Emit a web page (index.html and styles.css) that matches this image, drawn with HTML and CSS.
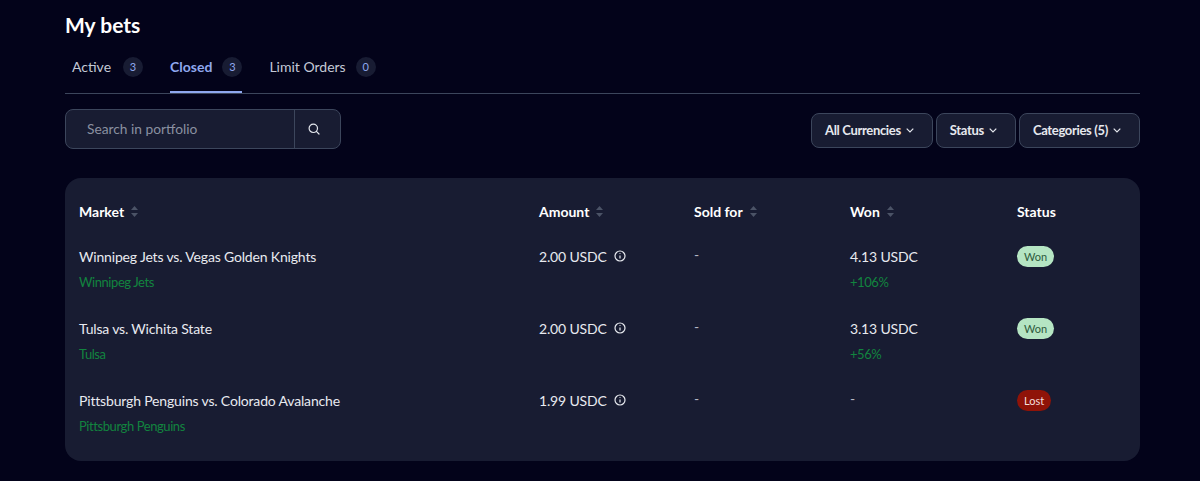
FILE: index.html
```html
<!DOCTYPE html>
<html lang="en">

<head>
    <meta charset="UTF-8">
    <meta name="viewport" content="width=device-width, initial-scale=1.0">
    <title>My bets</title>
    <link rel="stylesheet" href="styles.css">
</head>

<body>
    <main class="page">
        <h1 class="title">My bets</h1>

        <div class="tabs">
            <a class="tab">Active <span class="count">3</span></a>
            <a class="tab active">Closed <span class="count">3</span></a>
            <a class="tab">Limit Orders <span class="count">0</span></a>
        </div>

        <div class="toolbar">
            <div class="search">
                <div class="search-text">Search in portfolio</div>
                <div class="search-btn">
                    <svg width="12" height="12" viewBox="0 0 12 12" fill="none" stroke="#e4e7ee" stroke-width="1.2" stroke-linecap="round">
                        <circle cx="5.3" cy="5.3" r="4.2"/>
                        <path d="M8.4 8.4L11 11"/>
                    </svg>
                </div>
            </div>
            <div class="filters">
                <div class="filter">All Currencies <svg class="chev" viewBox="0 0 8 5"><path d="M.7.7L4 4l3.3-3.3"/></svg></div>
                <div class="filter">Status <svg class="chev" viewBox="0 0 8 5"><path d="M.7.7L4 4l3.3-3.3"/></svg></div>
                <div class="filter">Categories (5) <svg class="chev" viewBox="0 0 8 5"><path d="M.7.7L4 4l3.3-3.3"/></svg></div>
            </div>
        </div>

        <section class="card">
            <div class="row head">
                <div class="th">Market <svg class="sort" viewBox="0 0 7 11"><path d="M3.5 0L7 4H0z"/><path d="M3.5 11L0 7h7z"/></svg></div>
                <div class="th">Amount <svg class="sort" viewBox="0 0 7 11"><path d="M3.5 0L7 4H0z"/><path d="M3.5 11L0 7h7z"/></svg></div>
                <div class="th">Sold for <svg class="sort" viewBox="0 0 7 11"><path d="M3.5 0L7 4H0z"/><path d="M3.5 11L0 7h7z"/></svg></div>
                <div class="th">Won <svg class="sort" viewBox="0 0 7 11"><path d="M3.5 0L7 4H0z"/><path d="M3.5 11L0 7h7z"/></svg></div>
                <div class="th">Status</div>
            </div>

            <div class="row">
                <div>
                    <div class="main">Winnipeg Jets vs. Vegas Golden Knights</div>
                    <div class="sub">Winnipeg Jets</div>
                </div>
                <div class="main amount">2.00 USDC
                    <svg class="info" viewBox="0 0 12 12"><circle cx="6" cy="6" r="5"/><path d="M6 5.5v3M6 3.2v.8"/></svg>
                </div>
                <div class="dash">-</div>
                <div>
                    <div class="main">4.13 USDC</div>
                    <div class="sub">+106%</div>
                </div>
                <div><span class="badge won">Won</span></div>
            </div>

            <div class="row">
                <div>
                    <div class="main">Tulsa vs. Wichita State</div>
                    <div class="sub">Tulsa</div>
                </div>
                <div class="main amount">2.00 USDC
                    <svg class="info" viewBox="0 0 12 12"><circle cx="6" cy="6" r="5"/><path d="M6 5.5v3M6 3.2v.8"/></svg>
                </div>
                <div class="dash">-</div>
                <div>
                    <div class="main">3.13 USDC</div>
                    <div class="sub">+56%</div>
                </div>
                <div><span class="badge won">Won</span></div>
            </div>

            <div class="row">
                <div>
                    <div class="main">Pittsburgh Penguins vs. Colorado Avalanche</div>
                    <div class="sub">Pittsburgh Penguins</div>
                </div>
                <div class="main amount">1.99 USDC
                    <svg class="info" viewBox="0 0 12 12"><circle cx="6" cy="6" r="5"/><path d="M6 5.5v3M6 3.2v.8"/></svg>
                </div>
                <div class="dash">-</div>
                <div class="dash">-</div>
                <div><span class="badge lost">Lost</span></div>
            </div>
        </section>
    </main>
</body>

</html>
```

FILE: styles.css
```css
body {
    margin: 0;
    background: #03031a;
    color: #fff;
    font-family: 'Lato', sans-serif;
    font-size: 14px;
    overflow: hidden;
}

.page {
    width: 1075px;
    margin-left: 65px;
    padding-top: 11px;
}

.title {
    margin: 0;
    font-size: 21px;
    line-height: 28px;
    font-weight: 700;
    color: #fff;
}

.tabs {
    display: flex;
    gap: 27px;
    margin-top: 13px;
    padding-left: 7px;
    height: 41px;
    border-bottom: 1px solid #3c465c;
}

.tab {
    display: flex;
    align-items: center;
    gap: 10px;
    height: 41px;
    padding-bottom: 12px;
    box-sizing: border-box;
    font-size: 14px;
    color: #c3c9d6;
}

.tab:first-child {
    gap: 12px;
}

.tab.active {
    color: #8fa8ef;
    font-weight: 700;
    padding-bottom: 10px;
    border-bottom: 2px solid #8fa8ef;
}

.count {
    width: 20px;
    height: 20px;
    border-radius: 50%;
    background: #181c33;
    color: #8fa8ef;
    font-size: 11px;
    font-weight: 400;
    display: flex;
    align-items: center;
    justify-content: center;
}

.toolbar {
    display: flex;
    justify-content: space-between;
    margin-top: 15px;
}

.search {
    display: flex;
    width: 276px;
    height: 40px;
    box-sizing: border-box;
    border: 1px solid #3c465c;
    border-radius: 8px;
    background: #181c32;
}

.search-text {
    flex: 1;
    padding-left: 21px;
    line-height: 38px;
    font-size: 13.75px;
    color: #8a90a0;
    border-right: 1px solid #3c465c;
}

.search-btn {
    width: 45px;
    box-sizing: border-box;
    padding-left: 13px;
    display: flex;
    align-items: center;
}

.filters {
    display: flex;
    gap: 3px;
    margin-top: 4px;
}

.filter {
    display: flex;
    align-items: center;
    gap: 5px;
    height: 35px;
    box-sizing: border-box;
    padding: 0 18px 1px 13px;
    border: 1px solid #3c465c;
    border-radius: 8px;
    background: #181c32;
    font-size: 13px;
    letter-spacing: -0.33px;
    font-weight: 700;
    color: #e6e8ee;
}

.chev {
    width: 8px;
    height: 5px;
    fill: none;
    stroke: #e6e8ee;
    stroke-width: 1.2;
}

.card {
    margin-top: 29px;
    height: 283px;
    box-sizing: border-box;
    padding: 16px 14px 0;
    background: #181c32;
    border-radius: 16px;
}

.row {
    display: grid;
    grid-template-columns: 460px 155px 156px 167px 1fr;
    height: 72px;
    box-sizing: border-box;
    padding-top: 16px;
}

.row.head {
    height: 34px;
    padding-top: 0;
    margin-bottom: 2px;
    align-items: center;
}

.th {
    display: flex;
    align-items: center;
    gap: 7px;
    font-size: 14px;
    font-weight: 700;
    color: #fff;
}

.sort {
    width: 7px;
    height: 11px;
    fill: #4b5366;
}

.main {
    font-size: 14px;
    letter-spacing: -0.17px;
    line-height: 20px;
    margin-top: 1px;
    color: #e8eaf0;
}

.sub {
    margin-top: 5px;
    font-size: 13px;
    letter-spacing: -0.42px;
    line-height: 20px;
    color: #12843f;
}

.amount {
    display: flex;
    gap: 7px;
    align-items: center;
    align-self: start;
}

.info {
    width: 12px;
    height: 12px;
    margin-bottom: 2px;
    fill: none;
    stroke: #e8eaf0;
    stroke-width: 1.2;
}

.dash {
    color: #b4b9c6;
    font-size: 14px;
    line-height: 18px;
}

.badge {
    display: block;
    width: fit-content;
    padding: 0 7px;
    height: 21px;
    line-height: 21px;
    border-radius: 10.5px;
    font-size: 11px;
}

.badge.won {
    background: #b5e5c3;
    color: #2e5a3c;
}

.badge.lost {
    background: #8f1308;
    color: #f4dedb;
}
```
